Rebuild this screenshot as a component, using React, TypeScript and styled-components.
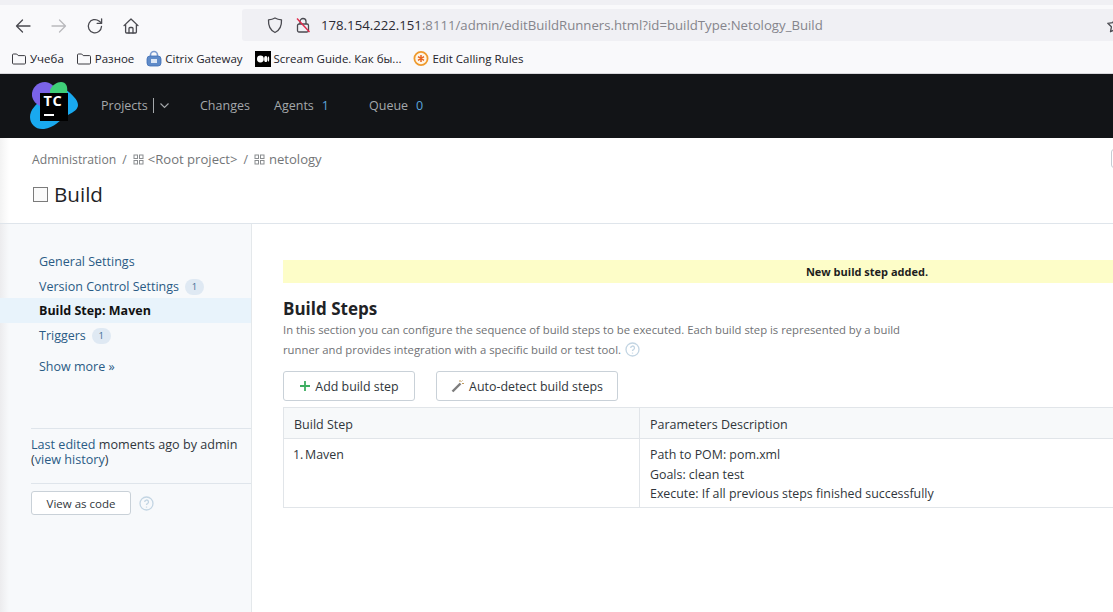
import styled, { createGlobalStyle } from "styled-components";
import { ReactNode } from "react";

const GlobalStyle = createGlobalStyle`
  html, body {
    margin: 0;
    padding: 0;
    background: #fff;
  }
  body {
    font-family: "Open Sans", "Noto Sans", sans-serif;
    font-size: 12px;
    color: #1f2326;
    overflow: hidden;
  }
`;

const Page = styled.div`
  width: 1113px;
  height: 612px;
  overflow: hidden;
  display: flex;
  flex-direction: column;
`;

/* browser chrome */
const TopStrip = styled.div`
  height: 5px;
  background: #f0f0f4;
  flex-shrink: 0;
`;

const Toolbar = styled.div`
  height: 36px;
  flex-shrink: 0;
  background: #f9f9fb;
  display: flex;
  align-items: flex-start;
  padding-left: 14px;
`;

const NavIcons = styled.div`
  display: flex;
  align-items: center;
  gap: 18px;
  width: 228px;
  height: 42px;
`;

const NavIcon = styled.svg<{ $faded?: boolean }>`
  width: 18px;
  height: 18px;
  fill: none;
  stroke: ${(p) => (p.$faded ? "#b9b9bd" : "#4a4a50")};
  stroke-width: 1.3;
  stroke-linecap: round;
  stroke-linejoin: round;
  flex-shrink: 0;
`;

const UrlBar = styled.div`
  flex: 1;
  height: 32px;
  margin-top: 4px;
  background: #f0f0f4;
  display: flex;
  align-items: center;
  padding-left: 24px;
  border-radius: 3px 0 0 3px;
  font-family: "Open Sans", sans-serif;
  font-size: 13.2px;
  white-space: nowrap;
  overflow: hidden;
`;

const UrlHost = styled.span`
  color: #2b2a33;
  margin-left: 9px;
`;

const UrlRest = styled.span`
  color: #85858c;
`;

const UrlSpacer = styled.div`
  flex: 1;
`;

const BookmarkBar = styled.div`
  height: 33px;
  flex-shrink: 0;
  background: #f9f9fb;
  border-bottom: 1px solid #d8d8dc;
  display: flex;
  align-items: center;
  padding: 3px 0 0 11px;
  box-sizing: border-box;
  gap: 12px;
`;

const Bookmark = styled.div`
  display: flex;
  align-items: center;
  gap: 3px;
  font-size: 11.5px;
  color: #23232a;
  white-space: nowrap;
`;

/* teamcity header */
const Header = styled.header`
  height: 64px;
  flex-shrink: 0;
  background: #121417;
  display: flex;
  align-items: center;
  padding-left: 30px;
  color: #a4a8ab;
  font-size: 12.5px;
`;

const Logo = styled.svg`
  width: 48px;
  height: 48px;
  margin-right: 23px;
  flex-shrink: 0;
`;

const HeaderItem = styled.div<{ $width: number }>`
  width: ${(p) => p.$width}px;
  margin-top: -2px;
  display: flex;
  align-items: center;
  white-space: nowrap;
`;

const HeaderCount = styled.span`
  color: #5aa5dc;
  margin-left: 8px;
`;

const Divider = styled.span`
  width: 1px;
  height: 15px;
  background: #a4a8ab;
  margin: 0 5px 0 5px;
`;

/* page title */
const TitleArea = styled.div`
  height: 86px;
  flex-shrink: 0;
  box-sizing: border-box;
  border-bottom: 1px solid #dfe5eb;
  padding: 12px 0 0 32px;
  background: linear-gradient(90deg, #f3f3f3 0, #fff 9px);
  position: relative;
`;

const Crumbs = styled.div`
  display: flex;
  align-items: center;
  color: #737577;
  font-size: 12.2px;
  height: 18px;
  white-space: nowrap;
`;

const CrumbName = styled.span`
  font-size: 13.1px;
`;

const CrumbSep = styled.span`
  margin: 0 6px;
`;

const GridIcon = styled.svg`
  width: 11px;
  height: 11px;
  margin-right: 4px;
  fill: none;
  stroke: #8a8d90;
  stroke-width: 1;
`;

const Title = styled.h1`
  margin: 12px 0 0 1px;
  display: flex;
  align-items: center;
  gap: 6px;
  font-size: 20.6px;
  font-weight: 400;
  line-height: 28px;
  color: #1f2326;
`;

const BuildBox = styled.span`
  width: 13px;
  height: 13px;
  border: 1.5px solid #7b7b7b;
  background: #fafafa;
`;

const CornerButton = styled.span`
  position: absolute;
  left: 1111px;
  top: 11px;
  width: 20px;
  height: 17px;
  border: 1px solid #c4ccd3;
  border-radius: 3px;
`;

/* body */
const Body = styled.div`
  flex: 1;
  display: flex;
  min-height: 0;
`;

const Sidebar = styled.aside`
  width: 252px;
  flex-shrink: 0;
  box-sizing: border-box;
  border-right: 1px solid #e4e8eb;
  background: linear-gradient(90deg, #ececee 0, #f7f9fb 9px);
  padding-top: 25px;
`;

const SideItem = styled.div<{ $active?: boolean }>`
  height: 25px;
  margin-top: ${(p) => (p.$active ? "-1px" : "0")};
  padding-left: 39px;
  display: flex;
  align-items: center;
  gap: 6px;
  font-size: 12.5px;
  white-space: nowrap;
  color: ${(p) => (p.$active ? "#111" : "#2a5b85")};
  font-weight: ${(p) => (p.$active ? 700 : 400)};
  background: ${(p) => (p.$active ? "#e8f3fb" : "transparent")};
`;

const Badge = styled.span`
  width: 19px;
  height: 16px;
  border-radius: 8px;
  background: #dfe9f3;
  color: #3f6c94;
  font-size: 9.5px;
  display: flex;
  align-items: center;
  justify-content: center;
`;

const ShowMore = styled(SideItem)`
  margin-top: 6px;
`;

const SideSection = styled.div<{ $top: number }>`
  margin: ${(p) => p.$top}px 0 0 31px;
  border-top: 1px solid #dfe5eb;
`;

const EditInfo = styled.div`
  padding-top: 8px;
  height: 46px;
  box-sizing: content-box;
  font-size: 12.6px;
  line-height: 15px;
  color: #30363b;
`;

const Link = styled.span`
  color: #2a5b85;
`;

const CodeRow = styled.div`
  display: flex;
  align-items: center;
  gap: 8px;
  padding-top: 7px;
`;

const Button = styled.div`
  display: flex;
  align-items: center;
  justify-content: center;
  box-sizing: border-box;
  border: 1px solid #c9d1d8;
  border-radius: 3px;
  background: #fff;
  color: #30363b;
  white-space: nowrap;
`;

const CodeButton = styled(Button)`
  width: 100px;
  height: 24px;
  font-size: 11.5px;
`;

const HelpIcon = styled.svg`
  width: 15px;
  height: 15px;
  fill: none;
  stroke: #c3d5e3;
  stroke-width: 1.3;
  flex-shrink: 0;
`;

const Main = styled.main`
  flex: 1;
  min-width: 0;
  overflow: hidden;
  padding: 36px 0 0 31px;
`;

const Content = styled.div`
  width: 1168px;
`;

const Notice = styled.div`
  height: 23px;
  background: #fdfdc8;
  color: #1d1d1d;
  font-size: 11px;
  font-weight: 700;
  display: flex;
  align-items: center;
  justify-content: center;
`;

const Heading = styled.h2`
  margin: 14px 0 0;
  font-size: 17px;
  line-height: 23px;
  font-weight: 700;
  color: #1f2326;
`;

const Description = styled.p`
  margin: 0;
  width: 640px;
  font-size: 11.3px;
  line-height: 20px;
  color: #6f7174;
  display: block;
`;

const InlineHelp = styled(HelpIcon)`
  vertical-align: -3px;
  margin-left: 1px;
`;

const Actions = styled.div`
  display: flex;
  gap: 21px;
  margin-top: 11px;
`;

const ActionButton = styled(Button)<{ $width: number }>`
  width: ${(p) => p.$width}px;
  height: 30px;
  gap: 4px;
  font-size: 12.4px;
`;

const Table = styled.div`
  margin-top: 6px;
  border: 1px solid #e1e5e9;
  display: grid;
  grid-template-columns: 355px 1fr;
  font-size: 12.4px;
  color: #30363b;
`;

const HeadCell = styled.div<{ $divided?: boolean }>`
  height: 28px;
  padding: 2px 0 0 10px;
  display: flex;
  align-items: center;
  font-size: 12.5px;
  background: #f7f9fa;
  border-bottom: 1px solid #e1e5e9;
  border-left: ${(p) => (p.$divided ? "1px solid #e1e5e9" : "none")};
`;

const Cell = styled.div<{ $divided?: boolean }>`
  height: 68px;
  padding: 6px 0 0 10px;
  box-sizing: border-box;
  line-height: 19.5px;
  border-left: ${(p) => (p.$divided ? "1px solid #e1e5e9" : "none")};
`;

const StepName = styled(Cell)`
  word-spacing: -1.5px;
  padding-left: 9px;
`;

const Folder = () => (
  <svg width="16" height="14" viewBox="0 0 16 14" fill="none" stroke="#3c3c42" strokeWidth="1">
    <path d="M1.5 3a1 1 0 0 1 1-1h3.2l1.5 1.6h6.3a1 1 0 0 1 1 1V11a1 1 0 0 1-1 1h-11a1 1 0 0 1-1-1z" />
  </svg>
);

const CitrixIcon = () => (
  <svg width="16" height="17" viewBox="0 0 16 17">
    <path d="M4.5 7V5a3.5 3.5 0 0 1 7 0v2" fill="none" stroke="#7b9bcf" strokeWidth="1.6" />
    <rect x="1" y="6" width="14" height="10" rx="3" fill="#5f8ac8" stroke="#3f6fb5" strokeWidth=".8" />
    <rect x="5" y="9" width="6" height="4" fill="#dbe6f5" />
  </svg>
);

const MediumIcon = () => (
  <svg width="16" height="16" viewBox="0 0 16 16">
    <rect width="16" height="16" fill="#000" />
    <ellipse cx="5.4" cy="8" rx="3.4" ry="3.4" fill="#fff" />
    <ellipse cx="10.8" cy="8" rx="1.7" ry="3.1" fill="#fff" />
    <ellipse cx="13.5" cy="8" rx=".7" ry="2.8" fill="#fff" />
  </svg>
);

const CallingIcon = () => (
  <svg width="16" height="17" viewBox="0 0 16 17">
    <circle cx="8" cy="8.5" r="6.6" fill="#fff6e6" stroke="#ef9a2d" strokeWidth="1.8" />
    <path d="M8 5v7M5 6.7l6 3.6M11 6.7l-6 3.6" stroke="#e8641e" strokeWidth="1.5" />
  </svg>
);

const HelpGlyph = () => (
  <>
    <circle cx="7.5" cy="7.5" r="6.5" />
    <path d="M5.7 5.9a1.9 1.9 0 1 1 2.8 1.7c-.6.3-1 .7-1 1.4" />
    <path d="M7.5 10.6v1" />
  </>
);

const Grid = () => (
  <GridIcon viewBox="0 0 11 11">
    <rect x="1" y="1" width="3.5" height="3.5" />
    <rect x="6.5" y="1" width="3.5" height="3.5" />
    <rect x="1" y="6.5" width="3.5" height="3.5" />
    <rect x="6.5" y="6.5" width="3.5" height="3.5" />
  </GridIcon>
);

const BookmarkItem = ({ icon, children }: { icon: ReactNode; children: ReactNode }) => (
  <Bookmark>
    {icon}
    {children}
  </Bookmark>
);

const App = () => {
  return (
    <Page>
      <GlobalStyle />
      <TopStrip />
      <Toolbar>
        <NavIcons>
          <NavIcon viewBox="0 0 18 18">
            <path d="M16 9H2.5M8.5 3 2.5 9l6 6" />
          </NavIcon>
          <NavIcon viewBox="0 0 18 18" $faded>
            <path d="M2 9h13.5M9.5 3l6 6-6 6" />
          </NavIcon>
          <NavIcon viewBox="0 0 18 18">
            <path d="M15.5 9.5A6.6 6.6 0 1 1 13 4l2.5 2" />
            <path d="M15.6 1.8v4.5h-4.5" />
          </NavIcon>
          <NavIcon viewBox="0 0 18 18">
            <path d="M2 8.6 9 2l7 6.6M3.6 7.4V15a1 1 0 0 0 1 1h8.8a1 1 0 0 0 1-1V7.4" />
            <path d="M7 16v-4.5a1 1 0 0 1 1-1h2a1 1 0 0 1 1 1V16" />
          </NavIcon>
        </NavIcons>
        <UrlBar>
          <NavIcon viewBox="0 0 18 18">
            <path d="M9 2c2 1.2 4 1.700 6.500 1.800C15.800 10 13.500 14.500 9 16.500 4.500 14.500 2.200 10 2.500 3.800 5 3.700 7 3.200 9 2z" />
          </NavIcon>
          <svg width="18" height="18" viewBox="0 0 18 18" fill="none" style={{ marginLeft: 10 }}>
            <path d="M6 8V5.500a3 3 0 0 1 6 0V8" stroke="#4a4a50" strokeWidth="1.300" />
            <rect x="3.500" y="8" width="11" height="8" rx="1.500" stroke="#4a4a50" strokeWidth="1.300" />
            <path d="M3 2.500 15.500 16" stroke="#e0294a" strokeWidth="1.400" />
          </svg>
          <UrlHost>178.154.222.151</UrlHost>
          <UrlRest>:8111/admin/editBuildRunners.html?id=buildType:Netology_Build</UrlRest>
          <UrlSpacer />
          <NavIcon viewBox="0 0 18 18" style={{ marginRight: -11 }}>
            <path d="M9 2l2.200 4.600 5 .7-3.600 3.500.9 5L9 13.400 4.500 15.800l.9-5L1.800 7.300l5-.7z" />
          </NavIcon>
        </UrlBar>
      </Toolbar>
      <BookmarkBar>
        <BookmarkItem icon={<Folder />}>Учеба</BookmarkItem>
        <BookmarkItem icon={<Folder />}>Разное</BookmarkItem>
        <BookmarkItem icon={<CitrixIcon />}>Citrix Gateway</BookmarkItem>
        <BookmarkItem icon={<MediumIcon />}>Scream Guide. Как бы...</BookmarkItem>
        <BookmarkItem icon={<CallingIcon />}>Edit Calling Rules</BookmarkItem>
      </BookmarkBar>

      <Header>
        <Logo viewBox="0 0 48 48">
          <path d="M0 35C0 28 6 22 12 18L36 8C42 12 48 18 48 23C48 27 44 30 38 33C30 38 24 46 14 47C6 48 0 42 0 35z" fill="#19a9ef" />
          <path d="M2 14C1 6 8 0 15 0C20 0 24 4 26 8L10 24C6 22 3 19 2 14z" fill="#7a63e8" />
          <path d="M20 8C22 3 27 0 31 0C36 0 38 4 37 11L20 12z" fill="#3fcf78" />
          <rect x="10" y="11" width="28" height="28" fill="#000" />
          <text x="13.500" y="24" fill="#fff" fontFamily="'Open Sans', sans-serif" fontSize="14.500" fontWeight="700" letterSpacing=".6">
            TC
          </text>
          <rect x="14" y="32" width="10" height="2" fill="#fff" />
        </Logo>
        <HeaderItem $width={99}>
          Projects
          <Divider />
          <svg width="11" height="11" viewBox="0 0 11 11" fill="none" stroke="#a4a8ab" strokeWidth="1.100">
            <path d="M1.500 3.500 5.500 7.500l4-4" />
          </svg>
        </HeaderItem>
        <HeaderItem $width={74}>Changes</HeaderItem>
        <HeaderItem $width={95}>
          Agents
          <HeaderCount>1</HeaderCount>
        </HeaderItem>
        <HeaderItem $width={70}>
          Queue
          <HeaderCount>0</HeaderCount>
        </HeaderItem>
      </Header>

      <TitleArea>
        <Crumbs>
          Administration
          <CrumbSep>/</CrumbSep>
          <Grid />
          <CrumbName>&lt;Root project&gt;</CrumbName>
          <CrumbSep>/</CrumbSep>
          <Grid />
          <CrumbName>netology</CrumbName>
        </Crumbs>
        <Title>
          <BuildBox />
          Build
        </Title>
        <CornerButton />
      </TitleArea>

      <Body>
        <Sidebar>
          <SideItem>General Settings</SideItem>
          <SideItem>
            Version Control Settings
            <Badge>1</Badge>
          </SideItem>
          <SideItem $active>Build Step: Maven</SideItem>
          <SideItem>
            Triggers
            <Badge>1</Badge>
          </SideItem>
          <ShowMore>Show more »</ShowMore>
          <SideSection $top={49}>
            <EditInfo>
              <Link>Last edited</Link> moments ago by admin
              <br />(<Link>view history</Link>)
            </EditInfo>
          </SideSection>
          <SideSection $top={0}>
            <CodeRow>
              <CodeButton>View as code</CodeButton>
              <HelpIcon viewBox="0 0 15 15">
                <HelpGlyph />
              </HelpIcon>
            </CodeRow>
          </SideSection>
        </Sidebar>

        <Main>
          <Content>
            <Notice>New build step added.</Notice>
            <Heading>Build Steps</Heading>
            <Description>
              In this section you can configure the sequence of build steps to be executed. Each build step is
              represented by a build runner and provides integration with a specific build or test tool.{" "}
              <InlineHelp viewBox="0 0 15 15">
                <HelpGlyph />
              </InlineHelp>
            </Description>
            <Actions>
              <ActionButton $width={132}>
                <svg width="12" height="12" viewBox="0 0 12 12" stroke="#3dae61" strokeWidth="1.800">
                  <path d="M6 1v10M1 6h10" />
                </svg>
                Add build step
              </ActionButton>
              <ActionButton $width={182}>
                <svg width="14" height="14" viewBox="0 0 14 14" fill="none">
                  <path d="M1.500 12.500 9.500 4.500" stroke="#7d7d7d" strokeWidth="2.400" />
                  <path d="M9 1v2M13 4.500h-2M11.500 1.500l-1 1" stroke="#c09a5b" strokeWidth="1" />
                </svg>
                Auto-detect build steps
              </ActionButton>
            </Actions>
            <Table>
              <HeadCell>Build Step</HeadCell>
              <HeadCell $divided>Parameters Description</HeadCell>
              <StepName>1. Maven</StepName>
              <Cell $divided>
                Path to POM: pom.xml
                <br />
                Goals: clean test
                <br />
                Execute: If all previous steps finished successfully
              </Cell>
            </Table>
          </Content>
        </Main>
      </Body>
    </Page>
  );
};

export default App;
